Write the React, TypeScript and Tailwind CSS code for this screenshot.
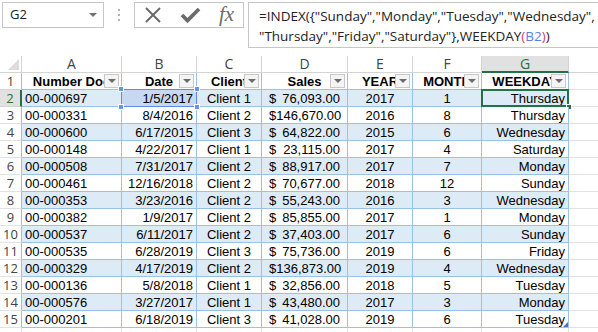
import React from "react";

type Row = [string, string, string, string, string, string, string];

const rows: Row[] = [
  ["00-000697", "1/5/2017", "Client 1", "76,093.00", "2017", "1", "Thursday"],
  ["00-000331", "8/4/2016", "Client 2", "146,670.00", "2016", "8", "Thursday"],
  ["00-000600", "6/17/2015", "Client 3", "64,822.00", "2015", "6", "Wednesday"],
  ["00-000148", "4/22/2017", "Client 1", "23,115.00", "2017", "4", "Saturday"],
  ["00-000508", "7/31/2017", "Client 2", "88,917.00", "2017", "7", "Monday"],
  ["00-000461", "12/16/2018", "Client 2", "70,677.00", "2018", "12", "Sunday"],
  ["00-000353", "3/23/2016", "Client 2", "55,243.00", "2016", "3", "Wednesday"],
  ["00-000382", "1/9/2017", "Client 2", "85,855.00", "2017", "1", "Monday"],
  ["00-000537", "6/11/2017", "Client 2", "37,403.00", "2017", "6", "Sunday"],
  ["00-000535", "6/28/2019", "Client 3", "75,736.00", "2019", "6", "Friday"],
  ["00-000329", "4/17/2019", "Client 2", "136,873.00", "2019", "4", "Wednesday"],
  ["00-000136", "5/8/2018", "Client 1", "32,856.00", "2018", "5", "Tuesday"],
  ["00-000576", "3/27/2017", "Client 1", "43,480.00", "2017", "3", "Monday"],
  ["00-000201", "6/18/2019", "Client 3", "41,028.00", "2019", "6", "Tuesday"],
];

const headers = ["Number Doc", "Date", "Client", "Sales", "YEAR", "MONTH", "WEEKDAY"];
const letters = ["A", "B", "C", "D", "E", "F", "G"];

const line1 = '=INDEX({"Sunday","Monday","Tuesday","Wednesday",';
const line2a = '"Thursday","Friday","Saturday"},WEEKDAY';

function DropBtn() {
  return (
    <div className="absolute right-[2px] top-[1px] w-[15px] h-[14px] border border-[#c8c8c8] bg-[#f4f4f4] flex items-center justify-center">
      <div className="w-0 h-0 border-l-[4px] border-r-[4px] border-t-[4px] border-l-transparent border-r-transparent border-t-[#6b6b6b]" />
    </div>
  );
}

function Handle({ pos }: { pos: string }) {
  return <div className={"absolute w-[6px] h-[6px] bg-[#6a95e6] border border-white " + pos} />;
}

export default function App() {
  return (
    <div className="w-[598px] h-[332px] overflow-hidden bg-white relative font-['Liberation_Sans',Arial,sans-serif] text-black">
      {/* Formula bar */}
      <div className="flex items-start h-[56px] pt-[2px] pl-[2px]">
        <div className="w-[102px] h-[26px] border border-[#c6c6c6] flex items-center justify-between pl-[7px] pr-[6px] font-['Open_Sans',sans-serif] text-[13px] text-[#222]">
          <span>G2</span>
          <div className="w-0 h-0 border-l-[4px] border-r-[4px] border-t-[4px] border-l-transparent border-r-transparent border-t-[#6f6f6f]" />
        </div>
        <div className="w-[30px] h-[26px] flex flex-col items-center justify-center gap-[3px]">
          <div className="w-[2px] h-[2px] bg-[#b4b4b4]" />
          <div className="w-[2px] h-[2px] bg-[#b4b4b4]" />
          <div className="w-[2px] h-[2px] bg-[#b4b4b4]" />
        </div>
        <div className="w-[110px] h-[26px] border border-[#c6c6c6] flex items-center pl-[9px] gap-[18px]">
          <svg width="18" height="18" viewBox="0 0 18 18">
            <path d="M2 2 L16 16 M16 2 L2 16" stroke="#6b6b6b" strokeWidth="2" fill="none" />
          </svg>
          <svg width="21" height="18" viewBox="0 0 21 18">
            <path d="M2 9 L7.5 14.5 L19 3" stroke="#6b6b6b" strokeWidth="3.8" fill="none" strokeLinejoin="miter" />
          </svg>
          <span className="font-['Liberation_Serif',serif] italic text-[21px] leading-none text-[#6b6b6b] -mt-[2px]">fx</span>
        </div>
        <div className="ml-[4px] flex-1 h-[46px] border-l border-t border-b border-[#c6c6c6] pl-[10px] pt-[3px] font-['Open_Sans',sans-serif] text-[13.5px] leading-[20px] text-[#222] whitespace-nowrap overflow-hidden">
          <div>{line1}</div>
          <div>
            {line2a}
            <span className="text-[#d0406c]">(</span>
            <span className="text-[#5b7ee0]">B2</span>
            <span className="text-[#d0406c]">)</span>
            {")"}
          </div>
        </div>
      </div>

      {/* Grid */}
      <div className="grid grid-cols-[22px_100px_75px_65px_86px_65px_69px_87px_1fr] auto-rows-[17px] text-[13px]">
        <div className="relative border-r border-b border-[#d4d4d4] bg-white">
          <svg className="absolute right-[2px] bottom-[2px]" width="11" height="11" viewBox="0 0 11 11">
            <path d="M11 0 L11 11 L0 11 Z" fill="#dcdcdc" />
          </svg>
        </div>
        {letters.map((l, i) =>
          i === 6 ? (
            <div key={l} className="bg-[#e1e1e1] border-r border-[#d4d4d4] border-b-2 border-b-[#217346] flex items-center justify-center text-[#217346] font-['Open_Sans',sans-serif] text-[14px] leading-none">
              {l}
            </div>
          ) : (
            <div key={l} className="border-r border-b border-[#d4d4d4] flex items-center justify-center text-[#444] font-['Open_Sans',sans-serif] text-[14px] leading-none">
              {l}
            </div>
          )
        )}
        <div className="border-b border-[#d4d4d4]" />

        <div className="border-r border-b border-[#d4d4d4] border-r-[#9bc2e6] flex items-center justify-center text-[#444] font-['Open_Sans',sans-serif] text-[13px] leading-none">
          1
        </div>
        {headers.map((h) => (
          <div key={h} className="relative border-r border-b border-[#9bc2e6] bg-white overflow-hidden flex items-center justify-center font-bold whitespace-nowrap leading-none">
            <span>{h}</span>
            <DropBtn />
          </div>
        ))}
        <div className="border-b border-[#e1e1e1]" />

        {rows.map((r, idx) => {
          const n = idx + 2;
          const band = n % 2 === 0;
          const bg = band ? "bg-[#ddebf7]" : "bg-white";
          const active = n === 2;
          const last = n === 15;
          return (
            <React.Fragment key={n}>
              {active ? (
                <div className="bg-[#e1e1e1] border-r-2 border-r-[#217346] border-b border-b-[#d4d4d4] flex items-center justify-center text-[#217346] font-['Open_Sans',sans-serif] text-[13px] leading-none">
                  {n}
                </div>
              ) : (
                <div className="border-r border-r-[#9bc2e6] border-b border-b-[#e1e1e1] flex items-center justify-center text-[#444] font-['Open_Sans',sans-serif] text-[13px] leading-none">
                  {n}
                </div>
              )}
              <div className={"border-r border-b border-[#9bc2e6] flex items-center pl-[3px] whitespace-nowrap leading-none " + bg}>{r[0]}</div>
              {active ? (
                <div className="relative border-r border-b border-[#9bc2e6] bg-[#c6d9f0] flex items-center justify-end pr-[3px] whitespace-nowrap leading-none">
                  {r[1]}
                  <div className="absolute -left-[1px] -top-[1px] -right-[1px] -bottom-[1px] border-[1.5px] border-[#5d8ce6]" />
                  <Handle pos="-left-[4px] -top-[4px]" />
                  <Handle pos="-right-[4px] -top-[4px]" />
                  <Handle pos="-left-[4px] -bottom-[4px]" />
                  <Handle pos="-right-[4px] -bottom-[4px]" />
                </div>
              ) : (
                <div className={"border-r border-b border-[#9bc2e6] flex items-center justify-end pr-[3px] whitespace-nowrap leading-none " + bg}>{r[1]}</div>
              )}
              <div className={"border-r border-b border-[#9bc2e6] flex items-center justify-center whitespace-nowrap leading-none " + bg}>{r[2]}</div>
              <div className={"border-r border-b border-[#9bc2e6] flex items-center justify-between pl-[7px] pr-[7px] whitespace-nowrap leading-none " + bg}>
                <span>$</span>
                <span>{r[3]}</span>
              </div>
              <div className={"border-r border-b border-[#9bc2e6] flex items-center justify-center whitespace-nowrap leading-none " + bg}>{r[4]}</div>
              <div className={"border-r border-b border-[#9bc2e6] flex items-center justify-center whitespace-nowrap leading-none " + bg}>{r[5]}</div>
              <div className={"relative border-r border-b border-[#9bc2e6] flex items-center justify-end pr-[3px] whitespace-nowrap leading-none " + bg}>
                {r[6]}
                {active && (
                  <>
                    <div className="absolute -left-[1px] -top-[1px] -right-[1px] -bottom-[1px] border-2 border-[#217346]" />
                    <div className="absolute -right-[4px] -bottom-[4px] w-[6px] h-[6px] bg-[#217346] border border-white" />
                  </>
                )}
                {last && (
                  <svg className="absolute right-0 bottom-0" width="5" height="5" viewBox="0 0 5 5">
                    <path d="M5 0 L5 5 L0 5 Z" fill="#4472c4" />
                  </svg>
                )}
              </div>
              <div className="border-b border-[#e1e1e1]" />
            </React.Fragment>
          );
        })}

        <div className="border-r border-[#e1e1e1]" />
        <div className="border-r border-[#e1e1e1]" />
        <div className="border-r border-[#e1e1e1]" />
        <div className="border-r border-[#e1e1e1]" />
        <div className="border-r border-[#e1e1e1]" />
        <div className="border-r border-[#e1e1e1]" />
        <div className="border-r border-[#e1e1e1]" />
        <div className="border-r border-[#e1e1e1]" />
        <div />
      </div>
    </div>
  );
}
